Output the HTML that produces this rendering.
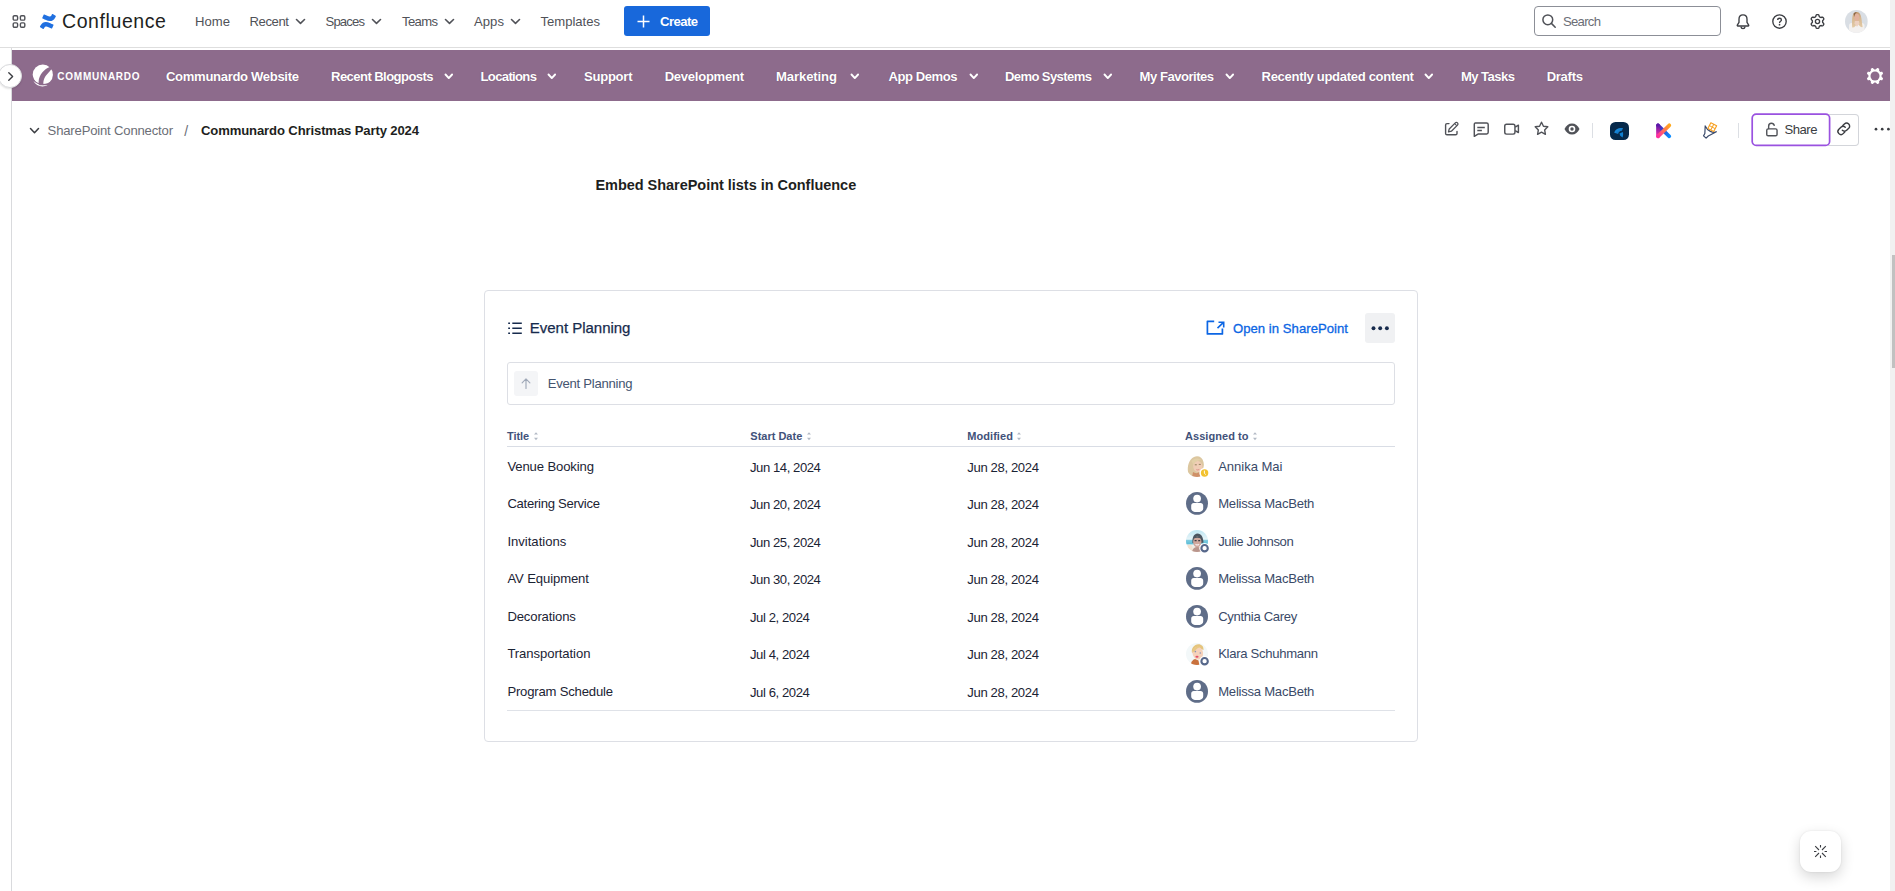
<!DOCTYPE html>
<html><head><meta charset="utf-8">
<style>
*{box-sizing:border-box;margin:0;padding:0}
html,body{width:1895px;height:891px;overflow:hidden;background:#fff}
body{font-family:"Liberation Sans",sans-serif;font-size:14px;color:#292a2e;position:relative}
.a{position:absolute;white-space:nowrap;line-height:1}
svg{position:absolute;overflow:visible}
</style></head><body>
<div class="a" style="left:0px;top:47px;width:1890px;height:1px;background:#dedede;"></div>
<div class="a" style="left:11px;top:48px;width:1px;height:843px;background:#d9dadd;"></div>
<div class="a" style="left:12px;top:50px;width:1878px;height:51px;background:#8d6b8c;"></div>
<svg style="left:12px;top:15px" width="14" height="13" viewBox="0 0 13 13"><g fill="none" stroke="#505258" stroke-width="1.4"><rect x="0.7" y="0.7" width="4.4" height="4.4" rx="1.2"/><rect x="7.9" y="0.7" width="4.4" height="4.4" rx="1.2"/><rect x="0.7" y="7.9" width="4.4" height="4.4" rx="1.2"/><rect x="7.9" y="7.9" width="4.4" height="4.4" rx="1.2"/></g></svg>
<svg style="left:40px;top:13.8px" width="15.8" height="15" viewBox="0 0 31 29"><path d="M1 22.5c-.4.6-.8 1.300-1 1.700-.3.500-.1 1.100.4 1.400l5.600 3.400c.5.300 1.100.100 1.400-.4.200-.4.600-1 1-1.600 2.200-3.600 4.400-3.200 8.400-1.300l5.600 2.600c.5.200 1.100 0 1.400-.5l2.700-6c.2-.5 0-1.100-.5-1.300-1.200-.6-3.500-1.600-5.600-2.600C12 13.700 5.500 14.200 1 22.500z" fill="#2070e0"/><path d="M30 6.500c.4-.6.800-1.300 1-1.700.3-.5.100-1.100-.4-1.400L25 0c-.5-.3-1.100-.1-1.400.4-.2.400-.6 1-1 1.600-2.200 3.600-4.400 3.200-8.400 1.300L8.600.7c-.5-.2-1.100 0-1.400.5l-2.700 6c-.2.500 0 1.100.5 1.300 1.200.6 3.500 1.600 5.600 2.600 8.400 4.200 14.900 3.700 19.400-4.600z" fill="#2070e0"/></svg>
<div class="a" style="left:62.0px;top:11.8px;font-size:19.5px;font-weight:normal;color:#1e1f21;letter-spacing:0.59px;">Confluence</div>
<div class="a" style="left:195.0px;top:15.1px;font-size:13.1px;font-weight:normal;color:#505258;letter-spacing:0.02px;">Home</div>
<div class="a" style="left:249.5px;top:15.1px;font-size:13.1px;font-weight:normal;color:#505258;letter-spacing:-0.40px;">Recent</div>
<svg style="left:296px;top:19px" width="9" height="5" viewBox="0 0 9 5"><path d="M0.5 0.5 L4.5 4.3 L8.5 0.5" fill="none" stroke="#505258" stroke-width="1.6" stroke-linecap="round" stroke-linejoin="round"/></svg>
<div class="a" style="left:325.5px;top:15.1px;font-size:13.1px;font-weight:normal;color:#505258;letter-spacing:-0.84px;">Spaces</div>
<svg style="left:372px;top:19px" width="9" height="5" viewBox="0 0 9 5"><path d="M0.5 0.5 L4.5 4.3 L8.5 0.5" fill="none" stroke="#505258" stroke-width="1.6" stroke-linecap="round" stroke-linejoin="round"/></svg>
<div class="a" style="left:402.0px;top:15.1px;font-size:13.1px;font-weight:normal;color:#505258;letter-spacing:-0.64px;">Teams</div>
<svg style="left:444.5px;top:19px" width="9" height="5" viewBox="0 0 9 5"><path d="M0.5 0.5 L4.5 4.3 L8.5 0.5" fill="none" stroke="#505258" stroke-width="1.6" stroke-linecap="round" stroke-linejoin="round"/></svg>
<div class="a" style="left:474.0px;top:15.1px;font-size:13.1px;font-weight:normal;color:#505258;letter-spacing:0.05px;">Apps</div>
<svg style="left:511px;top:19px" width="9" height="5" viewBox="0 0 9 5"><path d="M0.5 0.5 L4.5 4.3 L8.5 0.5" fill="none" stroke="#505258" stroke-width="1.6" stroke-linecap="round" stroke-linejoin="round"/></svg>
<div class="a" style="left:540.5px;top:15.1px;font-size:13.1px;font-weight:normal;color:#505258;letter-spacing:-0.02px;">Templates</div>
<div class="a" style="left:624px;top:6px;width:86px;height:30px;background:#1868db;border-radius:3px"></div>
<svg style="left:637px;top:14.5px" width="13" height="13" viewBox="0 0 13 13"><path d="M6.500 0.5v12M0.500 6.500h12" stroke="#fff" stroke-width="1.500" fill="none"/></svg>
<div class="a" style="left:660.0px;top:15.1px;font-size:13.1px;font-weight:bold;color:#fff;letter-spacing:-0.55px;">Create</div>
<div class="a" style="left:1534px;top:6px;width:187px;height:30px;background:#fff;border:1px solid #8c8f97;border-radius:4px"></div>
<svg style="left:1541.5px;top:14px" width="14" height="14" viewBox="0 0 14 14"><circle cx="5.800" cy="5.800" r="4.900" fill="none" stroke="#505258" stroke-width="1.500"/><path d="M9.400 9.400l3.800 3.800" stroke="#505258" stroke-width="1.500" stroke-linecap="round"/></svg>
<div class="a" style="left:1563.0px;top:15.1px;font-size:13.1px;font-weight:normal;color:#6b6e76;letter-spacing:-0.70px;">Search</div>
<svg style="left:1735.6px;top:13.5px" width="14" height="15.5" viewBox="0 0 14 15.500"><path d="M7 0.900C4.600 0.900 3 2.700 3 5.200V8.300L1.300 11.200C1.100 11.600 1.300 12 1.800 12H12.200C12.700 12 12.900 11.600 12.700 11.200L11 8.300V5.200C11 2.700 9.400 0.900 7 0.900Z" fill="none" stroke="#3b3d42" stroke-width="1.350" stroke-linejoin="round"/><path d="M4.900 12.600C5.100 13.900 5.900 14.600 7 14.600S8.900 13.900 9.100 12.600" fill="none" stroke="#3b3d42" stroke-width="1.350"/></svg>
<svg style="left:1771.8px;top:13.6px" width="15" height="15" viewBox="0 0 15 15"><circle cx="7.500" cy="7.500" r="6.700" fill="none" stroke="#3b3d42" stroke-width="1.350"/><path d="M5.700 6c0-1 .8-1.800 1.850-1.800s1.850.7 1.850 1.700c0 1.400-1.850 1.500-1.850 3" fill="none" stroke="#3b3d42" stroke-width="1.350"/><circle cx="7.550" cy="10.700" r="0.850" fill="#3b3d42"/></svg>
<svg style="left:1809.6px;top:13.8px" width="15" height="15" viewBox="0 0 15 15"><path d="M12.60 7.50L12.60 7.95L12.68 8.41L13.30 9.05L13.83 9.80L13.74 10.41L13.48 10.95L13.14 11.45L12.66 11.83L11.74 11.74L10.88 11.53L10.44 11.69L10.05 11.92L9.66 12.14L9.30 12.44L9.05 13.30L8.67 14.14L8.10 14.36L7.50 14.40L6.90 14.36L6.33 14.14L5.95 13.30L5.70 12.44L5.34 12.14L4.95 11.92L4.56 11.69L4.12 11.53L3.26 11.74L2.34 11.83L1.86 11.45L1.52 10.95L1.26 10.41L1.17 9.80L1.70 9.05L2.32 8.41L2.40 7.95L2.40 7.50L2.40 7.05L2.32 6.59L1.70 5.95L1.17 5.20L1.26 4.59L1.52 4.05L1.86 3.55L2.34 3.17L3.26 3.26L4.12 3.47L4.56 3.31L4.95 3.08L5.34 2.86L5.70 2.56L5.95 1.70L6.33 0.86L6.90 0.64L7.50 0.60L8.10 0.64L8.67 0.86L9.05 1.70L9.30 2.56L9.66 2.86L10.05 3.08L10.44 3.31L10.88 3.47L11.74 3.26L12.66 3.17L13.14 3.55L13.48 4.05L13.74 4.59L13.83 5.20L13.30 5.95L12.68 6.59L12.60 7.05Z" fill="none" stroke="#3b3d42" stroke-width="1.350" stroke-linejoin="round"/><circle cx="7.500" cy="7.500" r="2.100" fill="none" stroke="#3b3d42" stroke-width="1.350"/></svg>
<svg style="left:1845.2px;top:9.8px" width="22.8" height="22.8" viewBox="0 0 22.800 22.800"><defs><clipPath id="cpT"><circle cx="11.400" cy="11.400" r="11.400"/></clipPath><linearGradient id="hg" x1="0" y1="0" x2="0" y2="1"><stop offset="0" stop-color="#c39a72"/><stop offset="0.350" stop-color="#d6b68f"/><stop offset="1" stop-color="#e2cba8"/></linearGradient><filter id="bl" x="-20%" y="-20%" width="140%" height="140%"><feGaussianBlur stdDeviation="0.550"/></filter></defs><g clip-path="url(#cpT)"><rect width="22.800" height="22.800" fill="#d9dee4"/><g filter="url(#bl)"><path d="M4 23V15.500C4 13.500 6 12.800 8 12.800H15C17.500 12.800 19.500 13.500 19.500 15.500V23Z" fill="#f3f1f0"/><path d="M7.200 17.500C6.800 11 7 5 9 3C10.500 1.700 13 1.700 14.500 3.200C16.500 5.500 16.800 11 17.600 17C15.500 18 14 15 12.500 13.500C11 15 9.500 18.200 7.200 17.500Z" fill="url(#hg)"/><ellipse cx="11.800" cy="7.300" rx="2.500" ry="3.500" fill="#e2b29e"/><path d="M9.800 11L9.500 13.500L12 16.800L14.400 13.500L14 11Z" fill="#ecd0c0"/><path d="M8.600 3.500C9.500 2.300 11 2 12 2.200C10.500 3 9.600 4.500 9.300 7Z" fill="#8a6648"/></g></g></svg>
<div class="a" style="left:-2.500px;top:63.500px;width:24.500px;height:24.500px;border-radius:50%;background:#fff;border:1px solid #d9dadd;box-shadow:0 1px 2px rgba(0,0,0,.12)"></div>
<svg style="left:7.5px;top:71.5px" width="5.5" height="9" viewBox="0 0 5.500 9"><path d="M0.800 0.800L4.600 4.500L0.800 8.200" fill="none" stroke="#3b3d42" stroke-width="1.400" stroke-linecap="round" stroke-linejoin="round"/></svg>
<svg style="left:32px;top:64px" width="22" height="23" viewBox="0 0 22 23"><circle cx="10.800" cy="10.700" r="10.100" fill="#fff"/><path d="M0.300 12.300C1.500 18.500 8 22.300 15.800 19.800" fill="none" stroke="#8d6b8c" stroke-width="1.100"/><path d="M1.400 17C4 22 10.500 24 15.600 21C10.500 22 5 20.500 1.400 17Z" fill="#fff"/><path d="M18.300 2.800C12 5.200 7 10.500 6.600 17.800C6.500 19.500 7 20.600 7.600 21.300L11.800 21.300C11.200 19.800 11.200 18.200 11.700 16.200C12.500 13 14.500 10.800 16.200 9C17.800 7.300 19.300 5.600 19.800 4.300Z" fill="#8d6b8c"/></svg>
<div class="a" style="left:57.3px;top:71.5px;font-size:10px;font-weight:bold;color:#fff;letter-spacing:0.75px;">COMMUNARDO</div>
<div class="a" style="left:166.0px;top:69.9px;font-size:13.1px;font-weight:bold;color:#fff;letter-spacing:-0.34px;text-shadow:0 0 1px rgba(70,40,70,.55);">Communardo Website</div>
<div class="a" style="left:331.0px;top:69.9px;font-size:13.1px;font-weight:bold;color:#fff;letter-spacing:-0.58px;text-shadow:0 0 1px rgba(70,40,70,.55);">Recent Blogposts</div>
<svg style="left:444.5px;top:73.8px" width="7.6" height="4.8" viewBox="0 0 7.6 4.8"><path d="M0.5 0.5 L3.8 4.1 L7.1 0.5" fill="none" stroke="#fff" stroke-width="1.9" stroke-linecap="round" stroke-linejoin="round"/></svg>
<div class="a" style="left:480.5px;top:69.9px;font-size:13.1px;font-weight:bold;color:#fff;letter-spacing:-0.67px;text-shadow:0 0 1px rgba(70,40,70,.55);">Locations</div>
<svg style="left:548px;top:73.8px" width="7.6" height="4.8" viewBox="0 0 7.6 4.8"><path d="M0.5 0.5 L3.8 4.1 L7.1 0.5" fill="none" stroke="#fff" stroke-width="1.9" stroke-linecap="round" stroke-linejoin="round"/></svg>
<div class="a" style="left:584.0px;top:69.9px;font-size:13.1px;font-weight:bold;color:#fff;letter-spacing:-0.28px;text-shadow:0 0 1px rgba(70,40,70,.55);">Support</div>
<div class="a" style="left:664.7px;top:69.9px;font-size:13.1px;font-weight:bold;color:#fff;letter-spacing:-0.29px;text-shadow:0 0 1px rgba(70,40,70,.55);">Development</div>
<div class="a" style="left:776.0px;top:69.9px;font-size:13.1px;font-weight:bold;color:#fff;letter-spacing:-0.11px;text-shadow:0 0 1px rgba(70,40,70,.55);">Marketing</div>
<svg style="left:851px;top:73.8px" width="7.6" height="4.8" viewBox="0 0 7.6 4.8"><path d="M0.5 0.5 L3.8 4.1 L7.1 0.5" fill="none" stroke="#fff" stroke-width="1.9" stroke-linecap="round" stroke-linejoin="round"/></svg>
<div class="a" style="left:888.5px;top:69.9px;font-size:13.1px;font-weight:bold;color:#fff;letter-spacing:-0.47px;text-shadow:0 0 1px rgba(70,40,70,.55);">App Demos</div>
<svg style="left:970px;top:73.8px" width="7.6" height="4.8" viewBox="0 0 7.6 4.8"><path d="M0.5 0.5 L3.8 4.1 L7.1 0.5" fill="none" stroke="#fff" stroke-width="1.9" stroke-linecap="round" stroke-linejoin="round"/></svg>
<div class="a" style="left:1005.0px;top:69.9px;font-size:13.1px;font-weight:bold;color:#fff;letter-spacing:-0.63px;text-shadow:0 0 1px rgba(70,40,70,.55);">Demo Systems</div>
<svg style="left:1103.8px;top:73.8px" width="7.6" height="4.8" viewBox="0 0 7.6 4.8"><path d="M0.5 0.5 L3.8 4.1 L7.1 0.5" fill="none" stroke="#fff" stroke-width="1.9" stroke-linecap="round" stroke-linejoin="round"/></svg>
<div class="a" style="left:1139.6px;top:69.9px;font-size:13.1px;font-weight:bold;color:#fff;letter-spacing:-0.51px;text-shadow:0 0 1px rgba(70,40,70,.55);">My Favorites</div>
<svg style="left:1225.5px;top:73.8px" width="7.6" height="4.8" viewBox="0 0 7.6 4.8"><path d="M0.5 0.5 L3.8 4.1 L7.1 0.5" fill="none" stroke="#fff" stroke-width="1.9" stroke-linecap="round" stroke-linejoin="round"/></svg>
<div class="a" style="left:1261.5px;top:69.9px;font-size:13.1px;font-weight:bold;color:#fff;letter-spacing:-0.33px;text-shadow:0 0 1px rgba(70,40,70,.55);">Recently updated content</div>
<svg style="left:1425.3px;top:73.8px" width="7.6" height="4.8" viewBox="0 0 7.6 4.8"><path d="M0.5 0.5 L3.8 4.1 L7.1 0.5" fill="none" stroke="#fff" stroke-width="1.9" stroke-linecap="round" stroke-linejoin="round"/></svg>
<div class="a" style="left:1461.0px;top:69.9px;font-size:13.1px;font-weight:bold;color:#fff;letter-spacing:-0.57px;text-shadow:0 0 1px rgba(70,40,70,.55);">My Tasks</div>
<div class="a" style="left:1546.7px;top:69.9px;font-size:13.1px;font-weight:bold;color:#fff;letter-spacing:-0.31px;text-shadow:0 0 1px rgba(70,40,70,.55);">Drafts</div>
<svg style="left:1865.9px;top:66.8px" width="18" height="18" viewBox="0 0 18 18"><path d="M15.60 9.00L15.60 9.43L15.66 9.88L16.36 10.46L17.00 11.14L16.94 11.70L16.76 12.21L16.52 12.71L16.17 13.14L15.24 13.17L14.33 13.09L13.97 13.36L13.67 13.67L13.36 13.97L13.09 14.33L13.17 15.24L13.14 16.17L12.71 16.52L12.21 16.76L11.70 16.94L11.14 17.00L10.46 16.36L9.88 15.66L9.43 15.60L9.00 15.60L8.57 15.60L8.12 15.66L7.54 16.36L6.86 17.00L6.30 16.94L5.79 16.76L5.29 16.52L4.86 16.17L4.83 15.24L4.91 14.33L4.64 13.97L4.33 13.67L4.03 13.36L3.67 13.09L2.76 13.17L1.83 13.14L1.48 12.71L1.24 12.21L1.06 11.70L1.00 11.14L1.64 10.46L2.34 9.88L2.40 9.43L2.40 9.00L2.40 8.57L2.34 8.12L1.64 7.54L1.00 6.86L1.06 6.30L1.24 5.79L1.48 5.29L1.83 4.86L2.76 4.83L3.67 4.91L4.03 4.64L4.33 4.33L4.64 4.03L4.91 3.67L4.83 2.76L4.86 1.83L5.29 1.48L5.79 1.24L6.30 1.06L6.86 1.00L7.54 1.64L8.12 2.34L8.57 2.40L9.00 2.40L9.43 2.40L9.88 2.34L10.46 1.64L11.14 1.00L11.70 1.06L12.21 1.24L12.71 1.48L13.14 1.83L13.17 2.76L13.09 3.67L13.36 4.03L13.67 4.33L13.97 4.64L14.33 4.91L15.24 4.83L16.17 4.86L16.52 5.29L16.76 5.79L16.94 6.30L17.00 6.86L16.36 7.54L15.66 8.12L15.60 8.57Z" fill="#fff"/><circle cx="9" cy="9" r="4.500" fill="#8d6b8c"/></svg>
<svg style="left:30px;top:127.5px" width="9" height="5.5" viewBox="0 0 9 5.5"><path d="M0.5 0.5 L4.5 4.8 L8.5 0.5" fill="none" stroke="#3b3d42" stroke-width="1.5" stroke-linecap="round" stroke-linejoin="round"/></svg>
<div class="a" style="left:47.6px;top:123.9px;font-size:13.1px;font-weight:normal;color:#6b6e76;letter-spacing:-0.18px;">SharePoint Connector</div>
<div class="a" style="left:184.3px;top:124.3px;font-size:14px;font-weight:normal;color:#6b6e76;letter-spacing:0.00px;">/</div>
<div class="a" style="left:201.0px;top:123.9px;font-size:13.1px;font-weight:bold;color:#1e1f21;letter-spacing:-0.13px;">Communardo Christmas Party 2024</div>
<svg style="left:1444px;top:121.2px" width="16" height="15" viewBox="0 0 16 15"><path d="M5 2.600H3C2.200 2.600 1.600 3.200 1.600 4V12.400C1.600 13.200 2.200 13.800 3 13.800H11.600C12.400 13.800 13 13.200 13 12.400V10.400" fill="none" stroke="#505258" stroke-width="1.400" stroke-linecap="round"/><path d="M4.500 10.800L5.200 8L11.300 1.900C11.900 1.300 12.900 1.300 13.500 1.900C14.100 2.500 14.100 3.500 13.500 4.100L7.400 10.200Z" fill="none" stroke="#505258" stroke-width="1.300" stroke-linejoin="round"/><path d="M10.700 2.700L12.700 4.700" stroke="#505258" stroke-width="1.100"/></svg>
<svg style="left:1473px;top:121.6px" width="16" height="16" viewBox="0 0 16 16"><path d="M2.400 0.900h11.200c.9 0 1.600.7 1.600 1.600v7.800c0 .9-.7 1.600-1.600 1.600H5.400L1.300 14.300V2.500c0-.9.400-1.600 1.100-1.600z" fill="none" stroke="#505258" stroke-width="1.450" stroke-linejoin="round"/><path d="M4.300 5.400h7.500M4.300 8.500h4.600" stroke="#505258" stroke-width="1.550"/></svg>
<svg style="left:1503.6px;top:123.4px" width="15.5" height="12" viewBox="0 0 15.500 12"><rect x="0.750" y="1.300" width="10.200" height="9.800" rx="1.800" fill="none" stroke="#505258" stroke-width="1.450"/><path d="M11.200 4.200l3.200-2v7.400l-3.200-2" fill="none" stroke="#505258" stroke-width="1.450" stroke-linejoin="round"/></svg>
<svg style="left:1533.5px;top:121px" width="15" height="15" viewBox="0 0 15 15"><path d="M7.500 1.200l1.950 4 4.350.6-3.150 3.100.75 4.400-3.900-2.100-3.900 2.100.75-4.400L1.200 5.800l4.350-.6z" fill="none" stroke="#505258" stroke-width="1.400" stroke-linejoin="round"/></svg>
<svg style="left:1563.5px;top:123.3px" width="16" height="12" viewBox="0 0 16 12"><path d="M0.500 6C2 2.500 4.800 0.500 8 0.500S14 2.500 15.500 6C14 9.500 11.200 11.500 8 11.500S2 9.500 0.500 6Z" fill="#505258"/><circle cx="8" cy="6" r="3.300" fill="#fff"/><circle cx="8" cy="6" r="1.700" fill="#505258"/></svg>
<div class="a" style="left:1592px;top:123px;width:1px;height:15px;background:#dcdfe4;"></div>
<div class="a" style="left:1610px;top:122px;width:19px;height:18px;border-radius:5.500px;background:#05294b"></div>
<svg style="left:1610.15px;top:121.86px" width="19" height="18" viewBox="0 0 19 18"><defs><linearGradient id="fg" x1="0" y1="0" x2="1" y2="1"><stop offset="0" stop-color="#1e9bf0"/><stop offset="1" stop-color="#0b62ad"/></linearGradient></defs><path d="M4.25 10.70 C5.08 7.68 8.37 5.49 13.03 6.04 L11.93 8.64 C9.88 8.78 8.50 10.15 8.09 12.07 Z" fill="url(#fg)"/><path d="M9.47 11.52 L12.89 10.01 C13.31 12.00 13.17 13.85 12.55 15.50 L10.29 13.85 Z" fill="#0f7fd0"/></svg>
<svg style="left:1655px;top:122px" width="17" height="17" viewBox="0 0 17 17"><defs><linearGradient id="kg1" gradientUnits="userSpaceOnUse" x1="0" y1="3.3" x2="0" y2="14.3"><stop offset="0" stop-color="#5a17a8"/><stop offset="1" stop-color="#ff2fa8"/></linearGradient><linearGradient id="kg2" gradientUnits="userSpaceOnUse" x1="3.0" y1="14.3" x2="14.3" y2="3.3"><stop offset="0" stop-color="#ff2fa0"/><stop offset="1" stop-color="#ffa81a"/></linearGradient><linearGradient id="kg3" gradientUnits="userSpaceOnUse" x1="3.0" y1="3.3" x2="14.3" y2="14.3"><stop offset="0" stop-color="#5a17a8"/><stop offset="1" stop-color="#0a8bff"/></linearGradient></defs><path d="M3.00 3.30L8.65 8.80L3.00 14.30Z" fill="url(#kg1)"/><path d="M3.00 3.30L14.30 14.30" stroke="url(#kg3)" stroke-width="3.700" stroke-linecap="round"/><path d="M3.00 3.30V14.30" stroke="url(#kg1)" stroke-width="3.700" stroke-linecap="round"/><path d="M3.00 14.30L14.30 3.30" stroke="url(#kg2)" stroke-width="3.700" stroke-linecap="round"/></svg>
<svg style="left:1702.54px;top:121.52px" width="15" height="17" viewBox="0 0 15 17"><path d="M2.19 3.91 L1.85 11.45 L0.55 13.85 L3.09 16.12 L5.28 14.06 L13.37 9.81 C9.95 11.45 4.46 8.92 2.19 3.91Z" fill="#fff" stroke="#3a4a6b" stroke-width="1.200" stroke-linejoin="round"/><g transform="rotate(27 9.26 5.14)"><rect x="5.42" y="1.30" width="7.68" height="7.68" rx="0.600" fill="#f7a021"/><rect x="6.56" y="2.44" width="2.200" height="2.200" fill="#fff"/><rect x="6.56" y="5.64" width="2.200" height="2.200" fill="#fff"/><rect x="9.76" y="2.44" width="2.200" height="2.200" fill="#fff"/><rect x="9.76" y="5.64" width="2.200" height="2.200" fill="#fff"/></g></svg>
<div class="a" style="left:1738px;top:123px;width:1px;height:15px;background:#dcdfe4;"></div>
<div class="a" style="left:1828px;top:114px;width:31px;height:32px;border:1px solid #d3d5da;border-left:none;border-radius:0 4px 4px 0;background:#fff"></div>
<svg style="left:1751px;top:113px" width="80" height="34" viewBox="0 0 80 34"><rect x="1.200" y="1.100" width="77.400" height="31.300" rx="4" fill="#fff" stroke="#9a52e0" stroke-width="1.700"/></svg>
<svg style="left:1765.5px;top:121.5px" width="11.8" height="15" viewBox="0 0 12.500 15"><rect x="0.800" y="6.800" width="10.900" height="7.400" rx="1.500" fill="none" stroke="#505258" stroke-width="1.500"/><path d="M2.800 6.500V4c0-1.800 1.300-3.200 3-3.200 1.500 0 2.600.9 2.900 2.300" fill="none" stroke="#505258" stroke-width="1.500" stroke-linecap="round"/></svg>
<div class="a" style="left:1784.5px;top:123.4px;font-size:13.1px;font-weight:normal;color:#3b3d42;letter-spacing:-0.49px;">Share</div>
<svg style="left:1836.7px;top:122.3px" width="13.6" height="13.6" viewBox="0 0 14.500 14.500"><g fill="none" stroke="#3b3d42" stroke-width="1.500" stroke-linecap="round"><path d="M6.200 3.800l1.700-1.700c1.300-1.300 3.300-1.300 4.600 0s1.300 3.300 0 4.600l-2.200 2.200c-1.300 1.300-3.300 1.300-4.600 0"/><path d="M8.300 10.700l-1.700 1.700c-1.300 1.300-3.300 1.300-4.600 0s-1.300-3.300 0-4.600l2.200-2.200c1.300-1.300 3.300-1.300 4.600 0"/></g></svg>
<svg style="left:1870px;top:120px" width="20" height="20" viewBox="0 0 20 20"><circle cx="6" cy="9.200" r="1.350" fill="#3b3d42"/><circle cx="12.200" cy="9.200" r="1.350" fill="#3b3d42"/><circle cx="18.400" cy="9.200" r="1.350" fill="#3b3d42"/></svg>
<div class="a" style="left:595.4px;top:177.8px;font-size:14.5px;font-weight:bold;color:#1e1f21;letter-spacing:-0.03px;">Embed SharePoint lists in Confluence</div>
<div class="a" style="left:484px;top:290px;width:934px;height:452px;border:1px solid #dddfe5;border-radius:4px;background:#fff"></div>
<svg style="left:507.5px;top:321.9px" width="14" height="12.5" viewBox="0 0 14 12.500"><g stroke="#172b4d" stroke-width="1.500" fill="none"><path d="M4.300 1.200h9.500M4.300 6.200h9.500M4.300 11.200h9.500"/><path d="M0.200 1.200h1.800M0.200 6.200h1.800M0.200 11.200h1.800"/></g></svg>
<div class="a" style="left:529.8px;top:320.0px;font-size:15px;font-weight:normal;color:#172b4d;letter-spacing:-0.02px;-webkit-text-stroke:0.25px #172b4d;">Event Planning</div>
<svg style="left:1205.5px;top:320px" width="19" height="15.5" viewBox="0 0 19 15.500"><path d="M8.200 1.300H1.400V13.900H16.400V8.600" fill="none" stroke="#0c66e4" stroke-width="1.700" stroke-linejoin="round"/><path d="M11.500 8.200L17.500 2.400M12.500 2.200H17.700V7.400" fill="none" stroke="#0c66e4" stroke-width="1.600"/></svg>
<div class="a" style="left:1233.0px;top:322.4px;font-size:13.1px;font-weight:normal;color:#0c66e4;letter-spacing:0.04px;-webkit-text-stroke:0.3px #0c66e4;">Open in SharePoint</div>
<div class="a" style="left:1365px;top:313px;width:30px;height:30px;background:#f0f1f3;border-radius:3px"></div>
<svg style="left:1365px;top:313px" width="30" height="30" viewBox="0 0 30 30"><circle cx="8.500" cy="15.200" r="1.950" fill="#172b4d"/><circle cx="15.200" cy="15.200" r="1.950" fill="#172b4d"/><circle cx="21.900" cy="15.200" r="1.950" fill="#172b4d"/></svg>
<div class="a" style="left:507px;top:362px;width:888px;height:43px;border:1px solid #dddfe5;border-radius:3px;background:#fff"></div>
<div class="a" style="left:514px;top:371px;width:24px;height:25px;background:#f4f5f7;border-radius:3px"></div>
<svg style="left:521px;top:377.6px" width="10" height="11" viewBox="0 0 9 10.500"><path d="M4.500 10V1M0.800 4.600L4.500 0.900L8.200 4.600" fill="none" stroke="#a0a9b8" stroke-width="1.100" stroke-linecap="round" stroke-linejoin="round"/></svg>
<div class="a" style="left:547.7px;top:377.2px;font-size:13.1px;font-weight:normal;color:#44546f;letter-spacing:-0.25px;">Event Planning</div>
<div class="a" style="left:507.0px;top:430.7px;font-size:11px;font-weight:bold;color:#42527a;letter-spacing:-0.06px;">Title</div>
<svg style="left:533.5px;top:431.8px" width="4" height="8.4" viewBox="0 0 4 8.400"><path d="M0 2.600L2 0.200L4 2.600Z M0 5.800L2 8.200L4 5.800Z" fill="#b3bac5"/></svg>
<div class="a" style="left:750.3px;top:430.7px;font-size:11px;font-weight:bold;color:#42527a;letter-spacing:0.00px;">Start Date</div>
<svg style="left:806.5999999999999px;top:431.8px" width="4" height="8.4" viewBox="0 0 4 8.400"><path d="M0 2.600L2 0.200L4 2.600Z M0 5.800L2 8.200L4 5.800Z" fill="#b3bac5"/></svg>
<div class="a" style="left:967.3px;top:430.7px;font-size:11px;font-weight:bold;color:#42527a;letter-spacing:0.05px;">Modified</div>
<svg style="left:1017.1999999999999px;top:431.8px" width="4" height="8.4" viewBox="0 0 4 8.400"><path d="M0 2.600L2 0.200L4 2.600Z M0 5.800L2 8.200L4 5.800Z" fill="#b3bac5"/></svg>
<div class="a" style="left:1185.0px;top:430.7px;font-size:11px;font-weight:bold;color:#42527a;letter-spacing:0.06px;">Assigned to</div>
<svg style="left:1252.8999999999999px;top:431.8px" width="4" height="8.4" viewBox="0 0 4 8.400"><path d="M0 2.600L2 0.200L4 2.600Z M0 5.800L2 8.200L4 5.800Z" fill="#b3bac5"/></svg>
<div class="a" style="left:507px;top:446px;width:888px;height:1px;background:#d9dde5;"></div>
<div class="a" style="left:507px;top:710px;width:888px;height:1px;background:#dfe2e8;"></div>
<div class="a" style="left:507.4px;top:459.7px;font-size:13.1px;font-weight:normal;color:#1b2334;letter-spacing:-0.13px;">Venue Booking</div>
<div class="a" style="left:750.0px;top:460.8px;font-size:13.1px;font-weight:normal;color:#1b2334;letter-spacing:-0.44px;">Jun 14, 2024</div>
<div class="a" style="left:967.3px;top:460.8px;font-size:13.1px;font-weight:normal;color:#1b2334;letter-spacing:-0.37px;">Jun 28, 2024</div>
<div class="a" style="left:1218.2px;top:459.7px;font-size:13.1px;font-weight:normal;color:#3a4a68;letter-spacing:-0.06px;">Annika Mai</div>
<svg style="left:1186px;top:455.25px" width="22" height="22" viewBox="0 0 22 22"><defs><clipPath id="cpA"><circle cx="11" cy="11" r="11"/></clipPath></defs><g clip-path="url(#cpA)"><rect width="22" height="22" fill="#fff"/><g filter="url(#bl)"><path d="M2 17C1 11 3 4.500 8 2C12 0.300 16.500 2 17.500 7C18.500 11 17.500 14 15 16L12 22H5.500C3.500 21 2.500 19.500 2 17Z" fill="#dcc7a0"/><ellipse cx="11.800" cy="11.500" rx="4.600" ry="5.600" fill="#f0cdb6" transform="rotate(-12 11.800 11.500)"/><path d="M7 17C9 18.500 11.500 18.500 13.500 17L14.500 22.500H6Z" fill="#cf9068"/><path d="M5.500 6C8 3 12 2.500 15.500 5C12.500 5 9 6.500 7.500 10Z" fill="#e3d0a8"/><path d="M8.800 9.800h2M12.800 9.400h2" stroke="#8a7a55" stroke-width="0.900"/><path d="M10.300 14.700q1.500.7 3-.2" stroke="#d98a86" stroke-width="0.900" fill="none"/></g></g><circle cx="18.600" cy="18" r="5.200" fill="#fff"/><circle cx="18.600" cy="18" r="3.700" fill="#f2c230"/><path d="M18.400 16v2.200l1 1.200" stroke="#fff" stroke-width="0.900" fill="none" stroke-linecap="round"/></svg>
<div class="a" style="left:507.4px;top:497.2px;font-size:13.1px;font-weight:normal;color:#1b2334;letter-spacing:-0.28px;">Catering Service</div>
<div class="a" style="left:750.0px;top:498.3px;font-size:13.1px;font-weight:normal;color:#1b2334;letter-spacing:-0.44px;">Jun 20, 2024</div>
<div class="a" style="left:967.3px;top:498.3px;font-size:13.1px;font-weight:normal;color:#1b2334;letter-spacing:-0.37px;">Jun 28, 2024</div>
<div class="a" style="left:1218.2px;top:497.2px;font-size:13.1px;font-weight:normal;color:#3a4a68;letter-spacing:-0.25px;">Melissa MacBeth</div>
<svg style="left:1186px;top:492.35px" width="22" height="22.8" viewBox="0 0 22 22.800"><ellipse cx="11" cy="11.400" rx="11" ry="11.400" fill="#5f6d88"/><circle cx="11.100" cy="6.600" r="3.850" fill="#fff"/><path d="M7.700 10.950H14.700C16.100 10.950 17.200 12 17.200 13.400V16.500C17.200 18.500 15.600 19.600 13.600 19.900C12 20.150 10.400 20.150 8.800 19.900C6.800 19.600 5.200 18.500 5.200 16.500V13.400C5.200 12 6.300 10.950 7.700 10.950Z" fill="#fff"/></svg>
<div class="a" style="left:507.4px;top:534.7px;font-size:13.1px;font-weight:normal;color:#1b2334;letter-spacing:-0.01px;">Invitations</div>
<div class="a" style="left:750.0px;top:535.8px;font-size:13.1px;font-weight:normal;color:#1b2334;letter-spacing:-0.44px;">Jun 25, 2024</div>
<div class="a" style="left:967.3px;top:535.8px;font-size:13.1px;font-weight:normal;color:#1b2334;letter-spacing:-0.37px;">Jun 28, 2024</div>
<div class="a" style="left:1218.2px;top:534.7px;font-size:13.1px;font-weight:normal;color:#3a4a68;letter-spacing:-0.37px;">Julie Johnson</div>
<svg style="left:1186px;top:530.25px" width="22" height="22" viewBox="0 0 22 22"><defs><clipPath id="cpJ"><circle cx="11" cy="11" r="11"/></clipPath><linearGradient id="sky" x1="0" y1="0" x2="0" y2="1"><stop offset="0" stop-color="#bfe6f2"/><stop offset="0.420" stop-color="#e6f4f8"/><stop offset="0.470" stop-color="#7fcbe0"/><stop offset="0.620" stop-color="#5fbfd8"/><stop offset="0.680" stop-color="#eef0ec"/><stop offset="1" stop-color="#f1e4d6"/></linearGradient></defs><g clip-path="url(#cpJ)"><rect width="22" height="22" fill="url(#sky)"/><g filter="url(#bl)"><path d="M6.500 13C6 8 7.500 3.800 11.500 3.500C15.500 3.500 17 7 17.500 12.500L16 13Z" fill="#4b5560"/><ellipse cx="11.300" cy="12" rx="4.200" ry="5.400" fill="#cfa79c"/><path d="M7.500 8.500C9 6 13.500 5.500 15.500 8.800C13 7.600 10 7.600 7.500 8.500Z" fill="#4b5560"/><path d="M8.600 10.600h2M12.200 10.600h2" stroke="#3d3a40" stroke-width="1.100"/><path d="M9.500 14.200q1.800 1.400 3.600 0" stroke="#f4ecec" stroke-width="1.200" fill="none"/><path d="M6 22C6.500 18.500 8.500 17 11.300 17S16 18.500 16.500 22Z" fill="#b9958c"/><path d="M1.500 15.500C3 14 5.500 14.500 6.500 17L6 20.500L2.500 19Z" fill="#f3e1cf"/></g></g><circle cx="18.600" cy="18.200" r="5.300" fill="#fff"/><circle cx="18.600" cy="18.200" r="3.200" fill="none" stroke="#56678a" stroke-width="2.100"/></svg>
<div class="a" style="left:507.4px;top:572.2px;font-size:13.1px;font-weight:normal;color:#1b2334;letter-spacing:-0.11px;">AV Equipment</div>
<div class="a" style="left:750.0px;top:573.3px;font-size:13.1px;font-weight:normal;color:#1b2334;letter-spacing:-0.44px;">Jun 30, 2024</div>
<div class="a" style="left:967.3px;top:573.3px;font-size:13.1px;font-weight:normal;color:#1b2334;letter-spacing:-0.37px;">Jun 28, 2024</div>
<div class="a" style="left:1218.2px;top:572.2px;font-size:13.1px;font-weight:normal;color:#3a4a68;letter-spacing:-0.25px;">Melissa MacBeth</div>
<svg style="left:1186px;top:567.35px" width="22" height="22.8" viewBox="0 0 22 22.800"><ellipse cx="11" cy="11.400" rx="11" ry="11.400" fill="#5f6d88"/><circle cx="11.100" cy="6.600" r="3.850" fill="#fff"/><path d="M7.700 10.950H14.700C16.100 10.950 17.200 12 17.200 13.400V16.500C17.200 18.500 15.600 19.600 13.600 19.900C12 20.150 10.400 20.150 8.800 19.900C6.800 19.600 5.200 18.500 5.200 16.500V13.400C5.200 12 6.300 10.950 7.700 10.950Z" fill="#fff"/></svg>
<div class="a" style="left:507.4px;top:609.7px;font-size:13.1px;font-weight:normal;color:#1b2334;letter-spacing:-0.14px;">Decorations</div>
<div class="a" style="left:750.0px;top:610.8px;font-size:13.1px;font-weight:normal;color:#1b2334;letter-spacing:-0.43px;">Jul 2, 2024</div>
<div class="a" style="left:967.3px;top:610.8px;font-size:13.1px;font-weight:normal;color:#1b2334;letter-spacing:-0.37px;">Jun 28, 2024</div>
<div class="a" style="left:1218.2px;top:609.7px;font-size:13.1px;font-weight:normal;color:#3a4a68;letter-spacing:-0.32px;">Cynthia Carey</div>
<svg style="left:1186px;top:604.85px" width="22" height="22.8" viewBox="0 0 22 22.800"><ellipse cx="11" cy="11.400" rx="11" ry="11.400" fill="#5f6d88"/><circle cx="11.100" cy="6.600" r="3.850" fill="#fff"/><path d="M7.700 10.950H14.700C16.100 10.950 17.200 12 17.200 13.400V16.500C17.200 18.500 15.600 19.600 13.600 19.900C12 20.150 10.400 20.150 8.800 19.900C6.800 19.600 5.200 18.500 5.200 16.500V13.400C5.200 12 6.300 10.950 7.700 10.950Z" fill="#fff"/></svg>
<div class="a" style="left:507.4px;top:647.2px;font-size:13.1px;font-weight:normal;color:#1b2334;letter-spacing:-0.07px;">Transportation</div>
<div class="a" style="left:750.0px;top:648.3px;font-size:13.1px;font-weight:normal;color:#1b2334;letter-spacing:-0.43px;">Jul 4, 2024</div>
<div class="a" style="left:967.3px;top:648.3px;font-size:13.1px;font-weight:normal;color:#1b2334;letter-spacing:-0.37px;">Jun 28, 2024</div>
<div class="a" style="left:1218.2px;top:647.2px;font-size:13.1px;font-weight:normal;color:#3a4a68;letter-spacing:-0.30px;">Klara Schuhmann</div>
<svg style="left:1186px;top:642.75px" width="22" height="22" viewBox="0 0 22 22"><defs><clipPath id="cpK"><circle cx="11" cy="11" r="11"/></clipPath></defs><g clip-path="url(#cpK)"><rect width="22" height="22" fill="#f3f8f9"/><g filter="url(#bl)"><path d="M6 10C5 5.500 8 1.500 12.500 1.300C15.500 1.300 17.800 3.500 17.500 7L15 6Z" fill="#e5c47c"/><ellipse cx="11.800" cy="10.200" rx="5.300" ry="6.400" fill="#f5d2bb" transform="rotate(-10 11.800 10.200)"/><path d="M6.200 8C7.500 4.500 11 2.800 15.500 3.800C12.500 4.500 9.500 6 8.200 9.500Z" fill="#e8c883"/><path d="M4.500 22.500C5 19 6.500 16.500 9 16L12.500 17.500L13.500 23Z" fill="#c9713c"/><ellipse cx="11" cy="13.700" rx="1.600" ry="1" fill="#e4506a"/><circle cx="9.400" cy="8.600" r="0.800" fill="#8a93b8"/><circle cx="14.300" cy="10" r="0.800" fill="#8a93b8"/></g></g><circle cx="18.600" cy="18.200" r="5.300" fill="#fff"/><circle cx="18.600" cy="18.200" r="3.200" fill="none" stroke="#56678a" stroke-width="2.100"/></svg>
<div class="a" style="left:507.4px;top:684.7px;font-size:13.1px;font-weight:normal;color:#1b2334;letter-spacing:-0.19px;">Program Schedule</div>
<div class="a" style="left:750.0px;top:685.8px;font-size:13.1px;font-weight:normal;color:#1b2334;letter-spacing:-0.43px;">Jul 6, 2024</div>
<div class="a" style="left:967.3px;top:685.8px;font-size:13.1px;font-weight:normal;color:#1b2334;letter-spacing:-0.37px;">Jun 28, 2024</div>
<div class="a" style="left:1218.2px;top:684.7px;font-size:13.1px;font-weight:normal;color:#3a4a68;letter-spacing:-0.25px;">Melissa MacBeth</div>
<svg style="left:1186px;top:679.85px" width="22" height="22.8" viewBox="0 0 22 22.800"><ellipse cx="11" cy="11.400" rx="11" ry="11.400" fill="#5f6d88"/><circle cx="11.100" cy="6.600" r="3.850" fill="#fff"/><path d="M7.700 10.950H14.700C16.100 10.950 17.200 12 17.200 13.400V16.500C17.200 18.500 15.600 19.600 13.600 19.900C12 20.150 10.400 20.150 8.800 19.900C6.800 19.600 5.200 18.500 5.200 16.500V13.400C5.200 12 6.300 10.950 7.700 10.950Z" fill="#fff"/></svg>
<div class="a" style="left:1800px;top:831px;width:41px;height:41px;border-radius:11px;background:#fff;box-shadow:0 5px 14px rgba(0,0,0,.16),0 0 2px rgba(0,0,0,.10)"></div>
<svg style="left:1813.5px;top:845px" width="13" height="13" viewBox="0 0 13 13"><g stroke="#3b3d42" stroke-width="1.100" stroke-linecap="butt"><path d="M6.500 0v2.400M6.500 10.600V13M0 6.500h2.400M10.600 6.500H13"/><path d="M1.200 1.200l3.800 3.800M11.800 1.200L8 5M1.200 11.800L5 8M11.800 11.800L8 8"/></g></svg>
<div class="a" style="left:1890px;top:0px;width:5px;height:891px;background:#f1f1f1;"></div>
<div class="a" style="left:1892px;top:255px;width:3px;height:113px;background:#c1c1c1;"></div>
</body></html>
